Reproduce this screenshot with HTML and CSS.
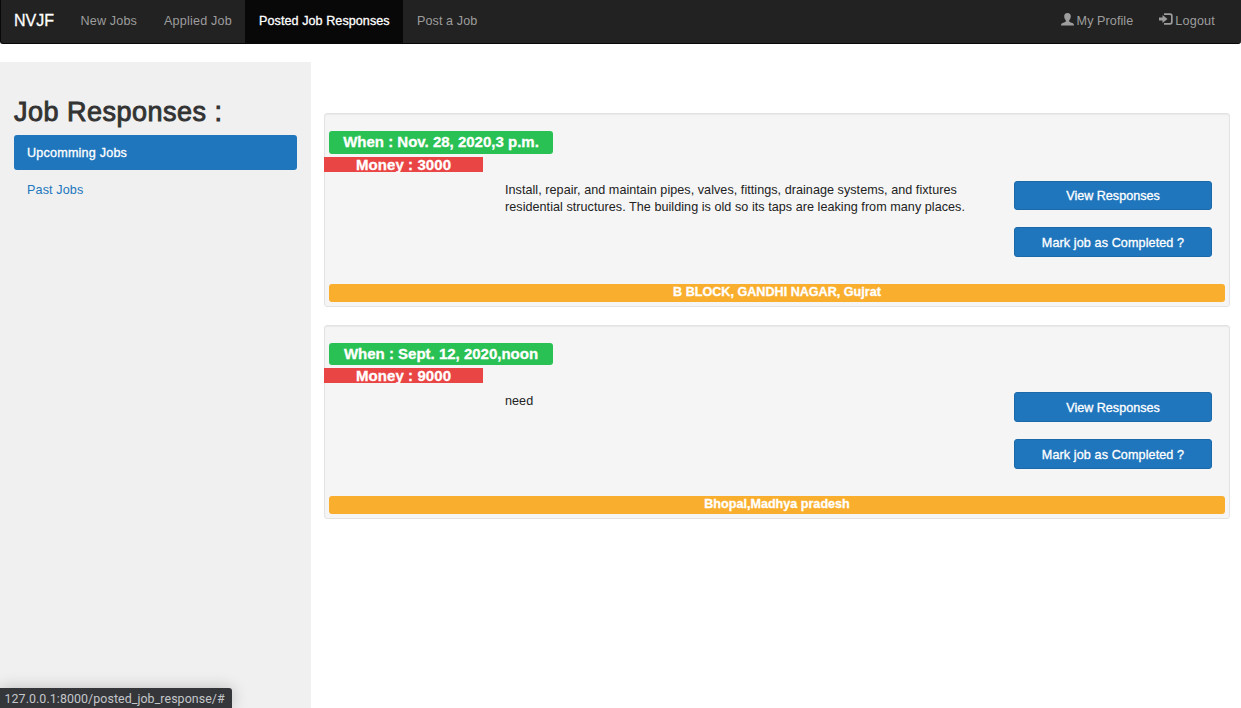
FILE: index.html
```html
<!DOCTYPE html>
<html lang="en">
<head>
<meta charset="utf-8">
<title>NVJF</title>
<link rel="stylesheet" href="styles.css">
</head>
<body>
<nav class="navbar">
  <a class="brand"><span>NVJF</span></a>
  <a class="nav-item new"><span>New Jobs</span></a>
  <a class="nav-item applied"><span>Applied Job</span></a>
  <a class="nav-item active"><span>Posted Job Responses</span></a>
  <a class="nav-item post"><span>Post a Job</span></a>
  <div class="nav-right">
    <a class="nav-link"><svg class="icon-user" viewBox="0 0 13 13"><path d="M6.500 0C4.200 0 3.200 1.300 3.200 3.300C3.200 5 3.900 6.400 4.800 7.200V8.500C4.600 9.200 1.700 9.700.7 10.500Q0 11.200 0 12.600H13Q13 11.200 12.300 10.500C11.300 9.700 8.400 9.200 8.200 8.500V7.200C9.100 6.400 9.800 5 9.800 3.300C9.800 1.300 8.800 0 6.500 0Z"/></svg><span class="profile-text">My Profile</span></a>
    <a class="nav-link"><svg class="icon-logout" viewBox="0 0 14 12"><path d="M5 .3H11Q13.700.3 13.700 3V9Q13.700 11.700 11 11.700H5V10H10.700Q12 10 12 8.700V3.300Q12 2 10.700 2H5ZM0 4.500H3.500V2L8.500 6L3.500 10V7.500H0Z"/></svg><span class="logout-text">Logout</span></a>
  </div>
</nav>
<div class="layout">
  <aside class="sidebar">
    <h2 class="heading"><span>Job Responses :</span></h2>
    <a class="pill pill-active"><span class="up-text">Upcomming Jobs</span></a>
    <a class="pill"><span class="past-text">Past Jobs</span></a>
  </aside>
  <main class="main">
    <section class="card">
      <div class="when"><span class="w1">When : Nov. 28, 2020,3 p.m.</span></div>
      <div class="money"><span>Money : 3000</span></div>
      <div class="row">
        <p class="desc"><span class="d1">Install, repair, and maintain pipes, valves, fittings, drainage systems, and fixtures</span><br><span class="d2">residential structures. The building is old so its taps are leaking from many places.</span></p>
        <div class="actions">
          <button class="btn"><span class="b1">View Responses</span></button>
          <button class="btn"><span class="b2">Mark job as Completed ?</span></button>
        </div>
      </div>
      <div class="place"><span class="p1">B BLOCK, GANDHI NAGAR, Gujrat</span></div>
    </section>
    <section class="card second">
      <div class="when"><span class="w2">When : Sept. 12, 2020,noon</span></div>
      <div class="money"><span>Money : 9000</span></div>
      <div class="row">
        <p class="desc"><span>need</span></p>
        <div class="actions">
          <button class="btn"><span class="b1">View Responses</span></button>
          <button class="btn"><span class="b2">Mark job as Completed ?</span></button>
        </div>
      </div>
      <div class="place"><span class="p2">Bhopal,Madhya pradesh</span></div>
    </section>
  </main>
</div>
<div class="status"><span>127.0.0.1:8000/posted_job_response/#</span></div>
</body>
</html>
```
FILE: styles.css
```css
* { box-sizing: border-box; }
body {
  margin: 0;
  height: 708px;
  overflow: hidden;
  display: flex;
  flex-direction: column;
  background: #fff;
  color: #333;
  font: 12.6px/17px "Liberation Sans", Arial, sans-serif;
}
.navbar {
  display: flex;
  flex: none;
  height: 44px;
  margin-bottom: 18px;
  background: #222;
  border-left: 1px solid #080808;
  border-bottom: 1px solid #080808;
  border-radius: 0 0 3px 3px;
  color: #9d9d9d;
  line-height: 42px;
  white-space: nowrap;
}
.brand { width: 66px; padding-left: 13px; color: #fff; font-size: 16px; line-height: 42px; -webkit-text-stroke: .3px; }
.nav-item { padding-left: 14px; letter-spacing: .08px; }
.new { width: 83px; padding-left: 13.5px; letter-spacing: .16px; }
.applied { width: 95px; padding-left: 14px; letter-spacing: .2px; }
.active { width: 158px; background: #080808; color: #fff; -webkit-text-stroke: .3px; letter-spacing: .06px; }
.nav-right { display: flex; gap: 26px; margin-left: auto; padding-right: 26px; line-height: 40px; }
.nav-link { display: flex; align-items: flex-start; }
.icon-user { width: 13px; height: 13px; margin: 13px 3px 0 0; fill: #9d9d9d; }
.icon-logout { width: 14px; height: 12px; margin: 13px 2px 0 0; fill: #9d9d9d; }
.profile-text { line-height: 42px; letter-spacing: .07px; }
.logout-text { line-height: 42px; letter-spacing: .2px; }
.layout { display: flex; flex: 1; }
.sidebar { width: 311px; padding: 34px 14px 0; background: #f0f0f0; }
.heading { height: 39px; margin: 0; font-size: 27px; line-height: 32px; font-weight: 400; letter-spacing: .5px; -webkit-text-stroke: .9px; white-space: nowrap; }
.pill { display: block; height: 35px; margin-bottom: 2px; padding-left: 13px; line-height: 36px; color: #2176bd; border-radius: 3px; letter-spacing: .12px; }
.pill-active { background: #1f76bd; color: #fff; letter-spacing: .2px; -webkit-text-stroke: .3px; }
.main { flex: 1; padding: 51px 11px 0 13px; }
.card {
  display: flex;
  flex-direction: column;
  height: 194px;
  margin-bottom: 18px;
  padding: 17px 4px 4px;
  background: #f5f5f5;
  border: 1px solid #e3e3e3;
  border-radius: 3px;
  box-shadow: inset 0 1px 1px rgba(0,0,0,.05);
}
.when, .money, .place { color: #fff; font-weight: 700; text-align: center; -webkit-text-stroke: .3px; }
.when { width: 224px; height: 23px; margin-bottom: 3px; line-height: 22px; font-size: 15px; background: #2ac154; border-radius: 3px; white-space: nowrap; }
.money { width: 159px; height: 15px; margin-left: -5px; font-size: 15px; line-height: 16px; letter-spacing: .08px; background: #ea4545; }
.row { display: flex; flex: 1; padding: 9px 13px 0 176px; }
.desc { flex: 1; margin: 0; padding-top: 1px; white-space: nowrap; color: #222; letter-spacing: .045px; }
.actions { display: flex; flex-direction: column; gap: 17px; }
.btn {
  width: 198px;
  height: 29px;
  padding: 0;
  border: 1px solid #1c69aa;
  border-radius: 3px;
  background: #1f76bd;
  color: #fff;
  font: inherit;
  line-height: 28px;
  -webkit-text-stroke: .3px;
}
.btn + .btn, .second .btn { height: 30px; padding-top: 2px; line-height: 26px; }
.b2 { letter-spacing: .1px; }
.place { height: 18px; line-height: 16px; font-size: 12.6px; background: #f9ae2e; border-radius: 3px; }
.second .when { height: 22px; }
.status {
  position: absolute;
  left: 0;
  bottom: 0;
  width: 232px;
  height: 20px;
  padding-left: 4.5px;
  background: #35363a;
  color: #c4c6ca;
  border-radius: 0 3px 0 0;
  box-shadow: 0 0 16px rgba(0,0,0,.22);
  font: 12.4px/22px Roboto, sans-serif;
  letter-spacing: .08px;
  white-space: nowrap;
}
```
